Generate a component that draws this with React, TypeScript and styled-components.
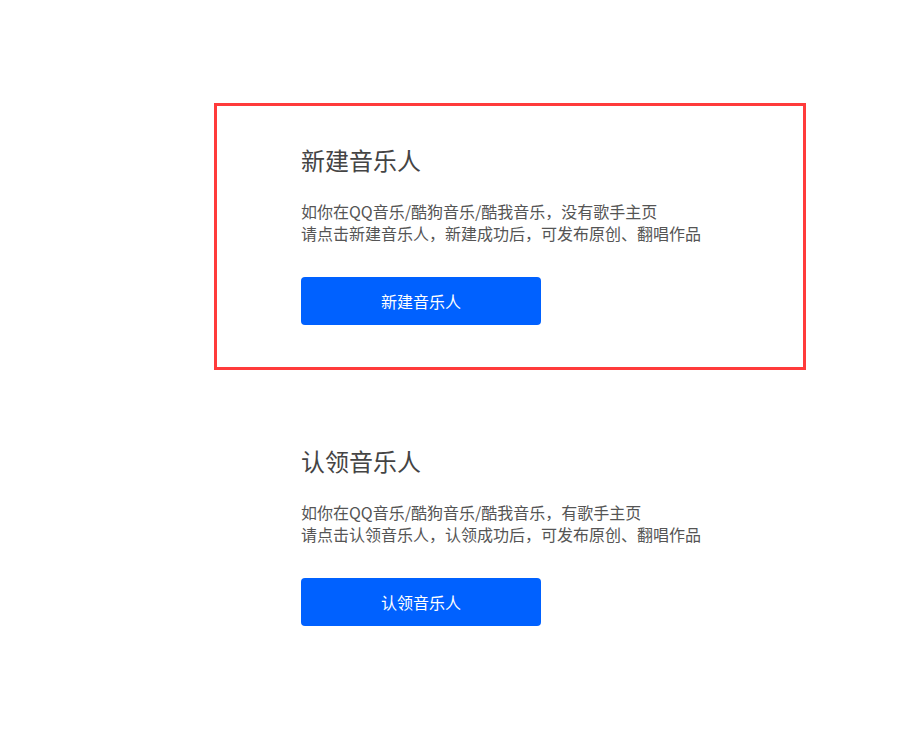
import React from "react";
import styled, { createGlobalStyle } from "styled-components";

const Global = createGlobalStyle`
  html, body { margin: 0; padding: 0; background: #fff; }
  body { font-family: "Noto Sans CJK SC", "Noto Sans", sans-serif; }
`;

const Page = styled.div`
  display: flex;
  flex-direction: column;
  gap: 34px;
  padding: 103px 0 0 214px;
`;

const Card = styled.section<{ $active?: boolean }>`
  box-sizing: border-box;
  width: 592px;
  height: 267px;
  border: 3px solid ${(p) => (p.$active ? "#ff3b3b" : "transparent")};
  padding: 39px 0 0 84px;
  display: flex;
  flex-direction: column;
  align-items: flex-start;
`;

const Title = styled.h2`
  margin: 0;
  font-size: 24px;
  line-height: 30px;
  font-weight: 400;
  color: #444;
`;

const Desc = styled.p`
  margin: 25px 0 0;
  font-size: 16px;
  line-height: 22px;
  color: #555;
`;

const Button = styled.button`
  margin-top: 33px;
  width: 240px;
  height: 48px;
  border: none;
  border-radius: 4px;
  background: #0061ff;
  color: #fff;
  font-family: inherit;
  font-size: 16px;
  cursor: pointer;
`;

const items = [
  {
    title: "新建音乐人",
    lines: ["如你在QQ音乐/酷狗音乐/酷我音乐，没有歌手主页", "请点击新建音乐人，新建成功后，可发布原创、翻唱作品"],
    active: true,
  },
  {
    title: "认领音乐人",
    lines: ["如你在QQ音乐/酷狗音乐/酷我音乐，有歌手主页", "请点击认领音乐人，认领成功后，可发布原创、翻唱作品"],
    active: false,
  },
];

export default function App() {
  return (
    <>
      <Global />
      <Page>
        {items.map((it) => (
          <Card key={it.title} $active={it.active}>
            <Title>{it.title}</Title>
            <Desc>
              {it.lines[0]}
              <br />
              {it.lines[1]}
            </Desc>
            <Button>{it.title}</Button>
          </Card>
        ))}
      </Page>
    </>
  );
}
